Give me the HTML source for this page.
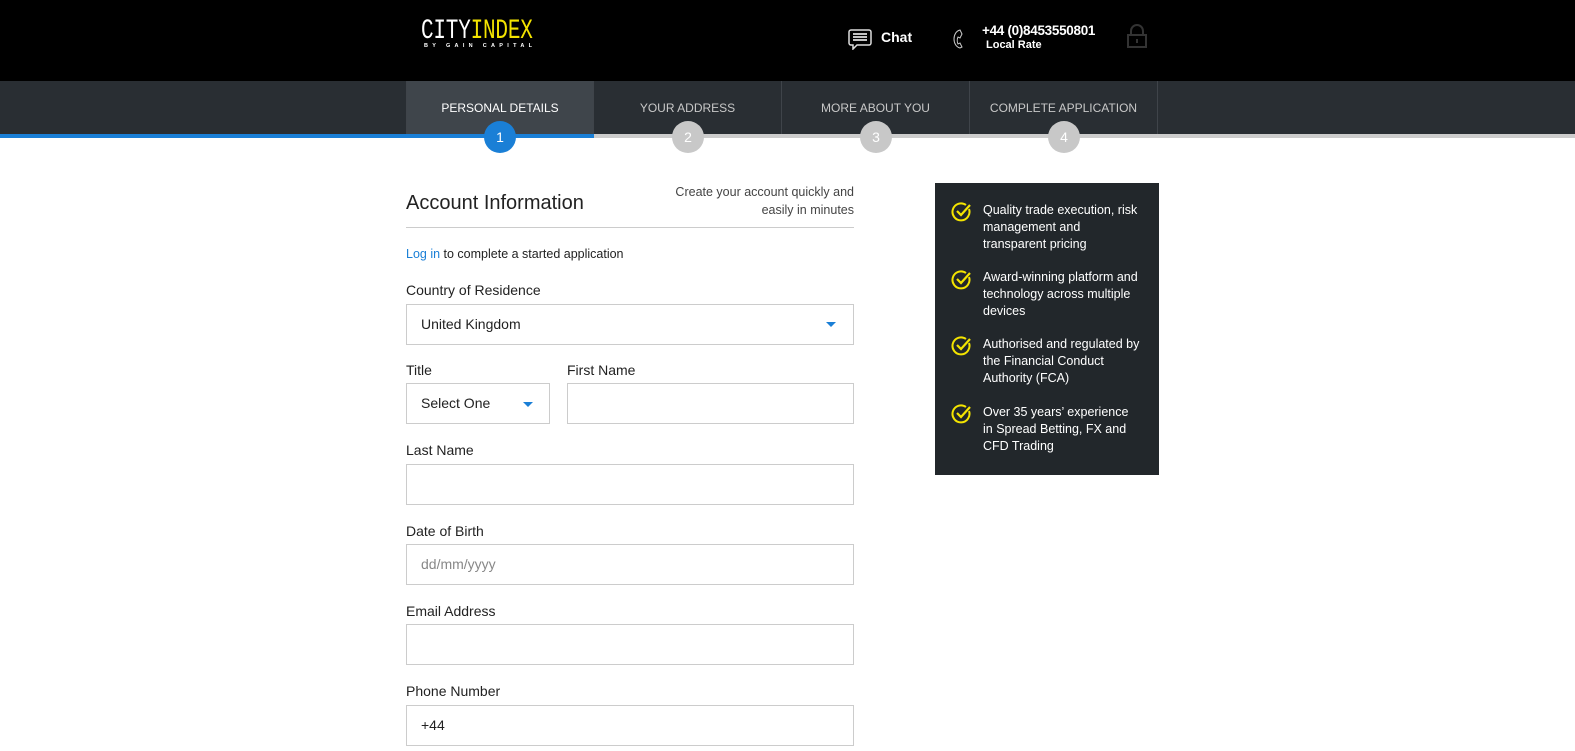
<!DOCTYPE html>
<html><head><meta charset="utf-8"><style>
*{margin:0;padding:0;box-sizing:border-box}
body{width:1575px;height:751px;overflow:hidden;background:#fff;font-family:"Liberation Sans",Arial,sans-serif;color:#222;position:relative}
.hdr{position:absolute;left:0;top:0;width:1575px;height:81px;background:#000}
.tabs{position:absolute;left:0;top:81px;width:1575px;height:53px;background:#292e33}
.line{position:absolute;top:134px;height:4px}
.tab{position:absolute;top:81px;height:53px;width:188px;text-align:center;font-size:12px;color:#c8c8c8;line-height:54px;border-right:1px solid #3f444a}
.circ{position:absolute;top:121px;width:32px;height:32px;border-radius:50%;background:#c8c8c8;color:#fff;font-size:14px;text-align:center;line-height:32px}
.abs{position:absolute}
.lbl{position:absolute;left:406px;font-size:14px;color:#222}
.inp{position:absolute;border:1px solid #ccc;height:41px;background:#fff;font-size:14px;line-height:39px;padding-left:14px;color:#222}
.arr{position:absolute;width:0;height:0;border-left:5px solid transparent;border-right:5px solid transparent;border-top:5px solid #1a7fd6}
.panel{position:absolute;left:935px;top:183px;width:224px;height:292px;background:#22272b}
.item{position:absolute;left:48px;font-size:12.5px;color:#fff;line-height:17px;width:158px}
.chk{position:absolute;left:16px}
</style></head><body>
<div class="hdr"></div>
<div class="abs" style="left:421px;top:17px;font-family:'Liberation Mono',monospace;font-size:21px;color:#fff;line-height:24px;transform:scaleY(1.3);transform-origin:0 0;letter-spacing:-0.2px">CITY<span style="color:#f4e400">INDEX</span></div>
<div class="abs" style="left:424px;top:43px;font-size:5.5px;color:#fff;letter-spacing:4.3px;font-weight:bold">BY GAIN CAPITAL</div>
<svg class="abs" style="left:848px;top:29px" width="24" height="21" viewBox="0 0 24 21"><path d="M3 1h18a2 2 0 0 1 2 2v11a2 2 0 0 1-2 2H9l-4 4v-4H3a2 2 0 0 1-2-2V3a2 2 0 0 1 2-2z" fill="none" stroke="#ddd" stroke-width="1.5"/><path d="M5 5h14M5 8h14M5 11h14" stroke="#ddd" stroke-width="1.8"/></svg>
<div class="abs" style="left:881px;top:29px;font-size:14px;font-weight:bold;color:#fff">Chat</div>
<svg class="abs" style="left:952px;top:28px" width="12" height="22" viewBox="0 0 12 22"><path d="M8 2C4 3 2 7 2 11s2 8 6 9l2-1-2-4-2 1c-1-2-1-5 0-7l2 1 2-4z" fill="none" stroke="#ccc" stroke-width="1"/></svg>
<div class="abs" style="left:982px;top:23px;font-size:13.5px;font-weight:bold;color:#fff;letter-spacing:-0.3px">+44 (0)8453550801</div>
<div class="abs" style="left:986px;top:39px;font-size:11px;font-weight:bold;color:#fff">Local Rate</div>
<svg class="abs" style="left:1126px;top:24px" width="22" height="24" viewBox="0 0 22 24"><path d="M5 11V7a6 6 0 0 1 12 0v4" fill="none" stroke="#333" stroke-width="2"/><rect x="2" y="11" width="18" height="12" fill="none" stroke="#333" stroke-width="2"/><rect x="10" y="15" width="2" height="4" fill="#333"/></svg>

<div class="tabs"></div>
<div class="line" style="left:0;width:594px;background:#1a7fd6"></div>
<div class="line" style="left:594px;width:981px;background:#ccc"></div>
<div class="tab" style="left:406px;background:#3f454b;color:#fff;border-left:1px solid #3f444a">PERSONAL DETAILS</div>
<div class="tab" style="left:594px">YOUR ADDRESS</div>
<div class="tab" style="left:782px">MORE ABOUT YOU</div>
<div class="tab" style="left:970px">COMPLETE APPLICATION</div>
<div class="circ" style="left:484px;background:#1a7fd6">1</div>
<div class="circ" style="left:672px">2</div>
<div class="circ" style="left:860px">3</div>
<div class="circ" style="left:1048px">4</div>

<div class="abs" style="left:406px;top:192px;font-size:20px;color:#222">Account Information</div>
<div class="abs" style="left:654px;top:183px;width:200px;text-align:right;font-size:12.5px;color:#444;line-height:18px">Create your account quickly and easily in minutes</div>
<div class="abs" style="left:406px;top:227px;width:448px;height:1px;background:#ccc"></div>
<div class="abs" style="left:406px;top:247px;font-size:12.5px;color:#222"><span style="color:#1a7fd6">Log in</span> to complete a started application</div>

<div class="lbl" style="top:282px">Country of Residence</div>
<div class="inp" style="left:406px;top:304px;width:448px">United Kingdom</div>
<div class="arr" style="left:826px;top:322px"></div>

<div class="lbl" style="top:362px">Title</div>
<div class="lbl" style="top:362px;left:567px">First Name</div>
<div class="inp" style="left:406px;top:383px;width:144px">Select One</div>
<div class="arr" style="left:523px;top:402px"></div>
<div class="inp" style="left:567px;top:383px;width:287px"></div>

<div class="lbl" style="top:442px">Last Name</div>
<div class="inp" style="left:406px;top:464px;width:448px"></div>
<div class="lbl" style="top:523px">Date of Birth</div>
<div class="inp" style="left:406px;top:544px;width:448px;color:#888">dd/mm/yyyy</div>
<div class="lbl" style="top:603px">Email Address</div>
<div class="inp" style="left:406px;top:624px;width:448px"></div>
<div class="lbl" style="top:683px">Phone Number</div>
<div class="inp" style="left:406px;top:705px;width:448px">+44</div>

<div class="panel">
<svg class="chk" style="top:18px" width="22" height="22" viewBox="0 0 22 22"><path d="M18 8a8.5 8.5 0 1 1-3-4" fill="none" stroke="#f4e400" stroke-width="2"/><path d="M6 10l4 4 9-10" fill="none" stroke="#f4e400" stroke-width="2.2"/></svg>
<div class="item" style="top:19px">Quality trade execution, risk management and transparent pricing</div>
<svg class="chk" style="top:86px" width="22" height="22" viewBox="0 0 22 22"><path d="M18 8a8.5 8.5 0 1 1-3-4" fill="none" stroke="#f4e400" stroke-width="2"/><path d="M6 10l4 4 9-10" fill="none" stroke="#f4e400" stroke-width="2.2"/></svg>
<div class="item" style="top:86px">Award-winning platform and technology across multiple devices</div>
<svg class="chk" style="top:152px" width="22" height="22" viewBox="0 0 22 22"><path d="M18 8a8.5 8.5 0 1 1-3-4" fill="none" stroke="#f4e400" stroke-width="2"/><path d="M6 10l4 4 9-10" fill="none" stroke="#f4e400" stroke-width="2.2"/></svg>
<div class="item" style="top:153px">Authorised and regulated by the Financial Conduct Authority (FCA)</div>
<svg class="chk" style="top:220px" width="22" height="22" viewBox="0 0 22 22"><path d="M18 8a8.5 8.5 0 1 1-3-4" fill="none" stroke="#f4e400" stroke-width="2"/><path d="M6 10l4 4 9-10" fill="none" stroke="#f4e400" stroke-width="2.2"/></svg>
<div class="item" style="top:221px">Over 35 years’ experience in Spread Betting, FX and CFD Trading</div>
</div>
</body></html>
